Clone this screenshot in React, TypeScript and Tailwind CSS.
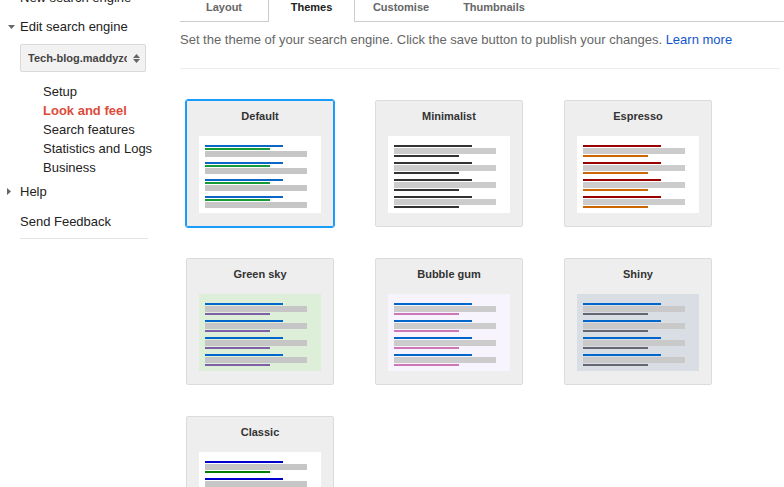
import React from "react";

type Theme = {
  name: string;
  bg: string;
  a: string;
  b: string;
  gray: string;
  order: "default" | "lgl";
  selected?: boolean;
};

const themes: Theme[] = [
  { name: "Default", bg: "bg-white", a: "bg-[#0b66c6]", b: "bg-[#159a35]", gray: "bg-[#c6c6c6]", order: "default", selected: true },
  { name: "Minimalist", bg: "bg-white", a: "bg-[#333333]", b: "bg-[#333333]", gray: "bg-[#cccccc]", order: "lgl" },
  { name: "Espresso", bg: "bg-white", a: "bg-[#990000]", b: "bg-[#cc6600]", gray: "bg-[#cccccc]", order: "lgl" },
  { name: "Green sky", bg: "bg-[#ddefd8]", a: "bg-[#0066cc]", b: "bg-[#7f5fa8]", gray: "bg-[#c6c6c6]", order: "lgl" },
  { name: "Bubble gum", bg: "bg-[#f7f4fd]", a: "bg-[#0066cc]", b: "bg-[#cc77b8]", gray: "bg-[#cccccc]", order: "lgl" },
  { name: "Shiny", bg: "bg-[#d9dde4]", a: "bg-[#0066cc]", b: "bg-[#666672]", gray: "bg-[#c9c9c9]", order: "lgl" },
  { name: "Classic", bg: "bg-white", a: "bg-[#0000cc]", b: "bg-[#008000]", gray: "bg-[#c6c6c6]", order: "lgl" },
];

function Group({ t }: { t: Theme }) {
  if (t.order === "default") {
    return (
      <div className="flex flex-col">
        <div className={`h-[2px] w-[78px] ${t.a}`} />
        <div className={`mt-[1px] h-[2px] w-[65px] ${t.b}`} />
        <div className={`mt-[1px] h-[6px] w-[102px] ${t.gray}`} />
      </div>
    );
  }
  return (
    <div className="flex flex-col">
      <div className={`h-[2px] w-[78px] ${t.a}`} />
      <div className={`mt-[1px] h-[6px] w-[102px] ${t.gray}`} />
      <div className={`mt-[1px] h-[2px] w-[65px] ${t.b}`} />
    </div>
  );
}

function Card({ t }: { t: Theme }) {
  return (
    <div
      className={`h-[127px] w-[148px] rounded-[2px] border bg-[#eeeeee] ${
        t.selected ? "border-[#1a9cfb] outline outline-1 outline-[#1a9cfb]" : "border-[#dcdcdc]"
      }`}
    >
      <div className="pt-[8px] text-center text-[11px] font-bold leading-[14px] text-[#333333]">{t.name}</div>
      <div className={`ml-[12px] mt-[13px] flex h-[77px] w-[122px] flex-col gap-[5px] pl-[6px] pt-[9px] ${t.bg}`}>
        <Group t={t} />
        <Group t={t} />
        <Group t={t} />
        <Group t={t} />
      </div>
    </div>
  );
}

function TriDown() {
  return (
    <svg width="7" height="4" viewBox="0 0 7 4" className="block">
      <path d="M0 0 L7 0 L3.5 4 Z" fill="#666" />
    </svg>
  );
}

function TriRight() {
  return (
    <svg width="4" height="7" viewBox="0 0 4 7" className="block">
      <path d="M0 0 L4 3.5 L0 7 Z" fill="#666" />
    </svg>
  );
}

export default function App() {
  return (
    <div
      className="flex h-[487px] w-[784px] items-start overflow-hidden bg-white text-[#222222]"
      style={{ fontFamily: '"Liberation Sans", Arial, sans-serif' }}
    >
      {/* Sidebar */}
      <div className="w-[180px] shrink-0 text-[13px] leading-[19px]">
        <div className="mt-[-12px] pl-[20px]">New search engine</div>
        <div className="mt-[10px] flex items-center">
          <div className="flex w-[20px] justify-center pl-[2px]">
            <TriDown />
          </div>
          <span>Edit search engine</span>
        </div>
        <div className="ml-[20px] mt-[8px] flex h-[28px] w-[126px] items-center rounded-[2px] border border-[#d9d9d9] bg-[#f2f2f2] pl-[7px]">
          <div className="w-[99px] overflow-hidden whitespace-nowrap text-[11px] font-bold text-[#444444]">
            Tech-blog.maddyzone.com
          </div>
          <div className="ml-[6px] flex flex-col gap-[1px]">
            <svg width="7" height="4" viewBox="0 0 7 4" className="block">
              <path d="M0 4 L7 4 L3.5 0 Z" fill="#666" />
            </svg>
            <svg width="7" height="4" viewBox="0 0 7 4" className="block">
              <path d="M0 0 L7 0 L3.5 4 Z" fill="#666" />
            </svg>
          </div>
        </div>
        <div className="mt-[10px] flex flex-col pl-[43px]">
          <div>Setup</div>
          <div className="font-bold text-[#dd4b39]">Look and feel</div>
          <div>Search features</div>
          <div>Statistics and Logs</div>
          <div>Business</div>
        </div>
        <div className="mt-[5px] flex items-center">
          <div className="flex w-[20px] justify-center pr-[2px]">
            <TriRight />
          </div>
          <span>Help</span>
        </div>
        <div className="mt-[11px] pl-[20px]">Send Feedback</div>
        <div className="ml-[20px] mt-[7px] w-[128px] border-t border-[#e5e5e5]" />
      </div>

      {/* Main */}
      <div className="min-w-0 flex-1">
        <div className="flex h-[22px] text-[11px] font-bold leading-[14px]">
          <div className="w-[88px] border-b border-[#cccccc] text-center text-[#666666]">Layout</div>
          <div className="w-[87px] border-x border-[#cccccc] bg-white text-center text-[#222222]">Themes</div>
          <div className="w-[92px] border-b border-[#cccccc] text-center text-[#666666]">Customise</div>
          <div className="w-[94px] border-b border-[#cccccc] text-center text-[#666666]">Thumbnails</div>
          <div className="flex-1 border-b border-[#cccccc]" />
        </div>
        <div className="mt-[9px] text-[13px] leading-[18px] text-[#666666]">
          Set the theme of your search engine. Click the save button to publish your changes.{" "}
          <span className="text-[#1155cc]">Learn more</span>
        </div>
        <div className="mt-[19px] w-[600px] border-t border-[#ebebeb]" />
        <div className="ml-[6px] mt-[31px] grid grid-cols-[148px_148px_148px] gap-x-[41px] gap-y-[31px]">
          {themes.map((t) => (
            <Card key={t.name} t={t} />
          ))}
        </div>
      </div>
    </div>
  );
}
